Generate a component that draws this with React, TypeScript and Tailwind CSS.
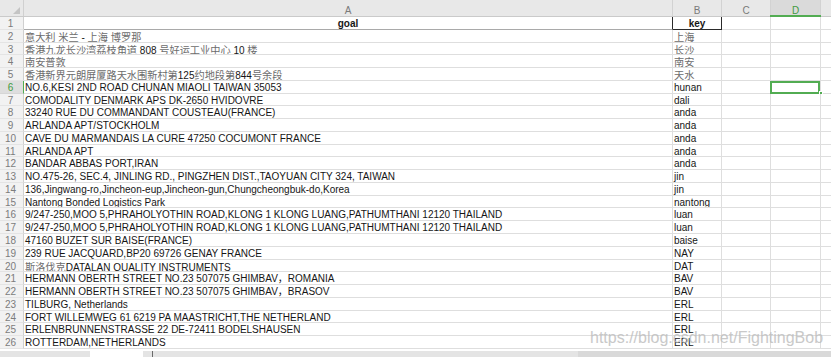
import React from "react";

const rows: [string, string][] = [
  ["goal", "key"],
  ["意大利 米兰 - 上海 博罗那", "上海"],
  ["香港九龙长沙湾荔枝角道 808 号好运工业中心 10 楼", "长沙"],
  ["南安普敦", "南安"],
  ["香港新界元朗屏厦路天水围新村第125约地段第844号余段", "天水"],
  ["NO.6,KESI 2ND ROAD CHUNAN MIAOLI TAIWAN 35053", "hunan"],
  ["COMODALITY DENMARK APS DK-2650 HVIDOVRE", "dali"],
  ["33240 RUE DU COMMANDANT COUSTEAU(FRANCE)", "anda"],
  ["ARLANDA APT/STOCKHOLM", "anda"],
  ["CAVE DU MARMANDAIS LA CURE 47250 COCUMONT FRANCE", "anda"],
  ["ARLANDA APT", "anda"],
  ["BANDAR ABBAS PORT,IRAN", "anda"],
  ["NO.475-26, SEC.4, JINLING RD., PINGZHEN DIST.,TAOYUAN CITY 324, TAIWAN", "jin"],
  ["136,Jingwang-ro,Jincheon-eup,Jincheon-gun,Chungcheongbuk-do,Korea", "jin"],
  ["Nantong Bonded Logistics Park", "nantong"],
  ["9/247-250,MOO 5,PHRAHOLYOTHIN ROAD,KLONG 1 KLONG LUANG,PATHUMTHANI 12120 THAILAND", "luan"],
  ["9/247-250,MOO 5,PHRAHOLYOTHIN ROAD,KLONG 1 KLONG LUANG,PATHUMTHANI 12120 THAILAND", "luan"],
  ["47160 BUZET SUR BAISE(FRANCE)", "baise"],
  ["239 RUE JACQUARD,BP20 69726 GENAY FRANCE", "NAY"],
  ["斯洛伐克DATALAN QUALITY INSTRUMENTS", "DAT"],
  ["HERMANN OBERTH STREET NO.23 507075 GHIMBAV，ROMANIA", "BAV"],
  ["HERMANN OBERTH STREET NO.23 507075 GHIMBAV，BRASOV", "BAV"],
  ["TILBURG, Netherlands", "ERL"],
  ["FORT WILLEMWEG 61 6219 PA MAASTRICHT,THE NETHERLAND", "ERL"],
  ["ERLENBRUNNENSTRASSE 22 DE-72411 BODELSHAUSEN", "ERL"],
  ["ROTTERDAM,NETHERLANDS", "ERL"],
];

function Text({ s }: { s: string }) {
  const parts = s.split(/([\u4e00-\u9fff]+)/).filter((p) => p.length > 0);
  return (
    <>
      {parts.map((p, i) =>
        /[\u4e00-\u9fff]/.test(p) ? (
          <span key={i} className="text-[#6c6c6c] font-['Noto_Sans_CJK_SC',sans-serif] font-normal text-[10.2px]">
            {p}
          </span>
        ) : (
          <span key={i}>{p}</span>
        )
      )}
    </>
  );
}

export default function App() {
  return (
    <div className="relative w-[831px] h-[357px] overflow-hidden bg-white font-['Liberation_Sans','Noto_Sans_CJK_SC',Arial,sans-serif] text-[10px] text-[#161616]">
      {/* column header */}
      <div className="flex h-[17px] bg-[#e8e8e8] border-b border-[#cacaca] text-[#7a7a7a] leading-[12px]">
        <div className="w-[24px] shrink-0 border-r border-[#d0d0d0] flex items-end justify-end pr-[3px] pb-[2px]">
          <svg width="7" height="7" viewBox="0 0 7 7">
            <polygon points="7,0 7,7 0,7" fill="#c4c4c4" />
          </svg>
        </div>
        <div className="w-[649px] shrink-0 border-r border-[#d2d2d2] text-center pt-[5px]">A</div>
        <div className="w-[49px] shrink-0 border-r border-[#d2d2d2] text-center pt-[5px]">B</div>
        <div className="w-[49px] shrink-0 border-r border-[#d2d2d2] text-center pt-[5px]">C</div>
        <div className="w-[50px] shrink-0 border-r border-[#d2d2d2] text-center pt-[5px] bg-[#dadada] text-[#3f9b3f] relative">
          D
          <div className="absolute left-[-1px] right-[-1px] bottom-[-1px] h-[2px] bg-[#52ac52]" />
        </div>
        <div className="flex-1" />
      </div>

      {/* rows */}
      {rows.map(([a, b], idx) => {
        const n = idx + 1;
        const sel = n === 6;
        const first = n === 1;
        return (
          <div key={n} className="flex h-[12.77px] leading-[12px]">
            <div
              className={
                sel
                  ? "w-[24px] shrink-0 border-r border-b border-r-[#52ac52] border-b-[#d6d6d6] bg-[#dedede] text-[#3f9b3f] text-center pt-px pr-[2px]"
                  : "w-[24px] shrink-0 border-r border-b border-r-[#d0d0d0] border-b-[#e4e4e4] bg-[#f2f2f2] text-[#7c7c7c] text-center pt-px pr-[2px]"
              }
            >
              {n}
            </div>
            <div
              className={
                first
                  ? "w-[649px] shrink-0 border-r border-b border-r-[#2a2a2a] border-b-[#a9a9a9] font-bold text-center pt-px whitespace-nowrap overflow-hidden"
                  : "w-[649px] shrink-0 border-r border-b border-[#dedede] pl-px pt-px whitespace-nowrap overflow-hidden"
              }
            >
              <Text s={a} />
            </div>
            <div
              className={
                first
                  ? "w-[49px] shrink-0 border-r border-b border-[#2a2a2a] font-bold text-center pt-px whitespace-nowrap overflow-hidden"
                  : "w-[49px] shrink-0 border-r border-b border-[#dedede] pl-px pt-px whitespace-nowrap overflow-hidden"
              }
            >
              <Text s={b} />
            </div>
            <div className="w-[49px] shrink-0 border-r border-b border-[#dedede]" />
            <div className="w-[50px] shrink-0 border-r border-b border-[#dedede] relative">
              {sel && (
                <>
                  <div className="absolute left-[-1px] top-0 w-[50px] h-[13.5px] border-2 border-[#52ac52]" />
                  <div className="absolute right-[-3px] top-[10px] w-[4px] h-[4px] bg-[#52ac52] border border-white" />
                </>
              )}
            </div>
            <div className="flex-1 border-b border-[#dedede]" />
          </div>
        );
      })}

      {/* bottom sheet bar */}
      <div className="h-[2px] bg-white" />
      <div className="flex h-[6px] bg-[#e4e4e4]">
        <div className="w-[90px] shrink-0" />
        <div className="w-[53px] shrink-0 bg-white" />
        <div className="w-[9px] shrink-0" />
        <div className="w-px shrink-0 bg-[#6a6a6a]" />
        <div className="w-[425px] shrink-0" />
        <div className="flex-1 bg-[#d9d9d9]" />
      </div>

      {/* watermark */}
      <div className="absolute left-[590px] top-[330px] text-[16px] leading-[16px] text-[#bcbcbc] opacity-80 whitespace-nowrap pointer-events-none">
        https://blog.csdn.net/FightingBob
      </div>
    </div>
  );
}
